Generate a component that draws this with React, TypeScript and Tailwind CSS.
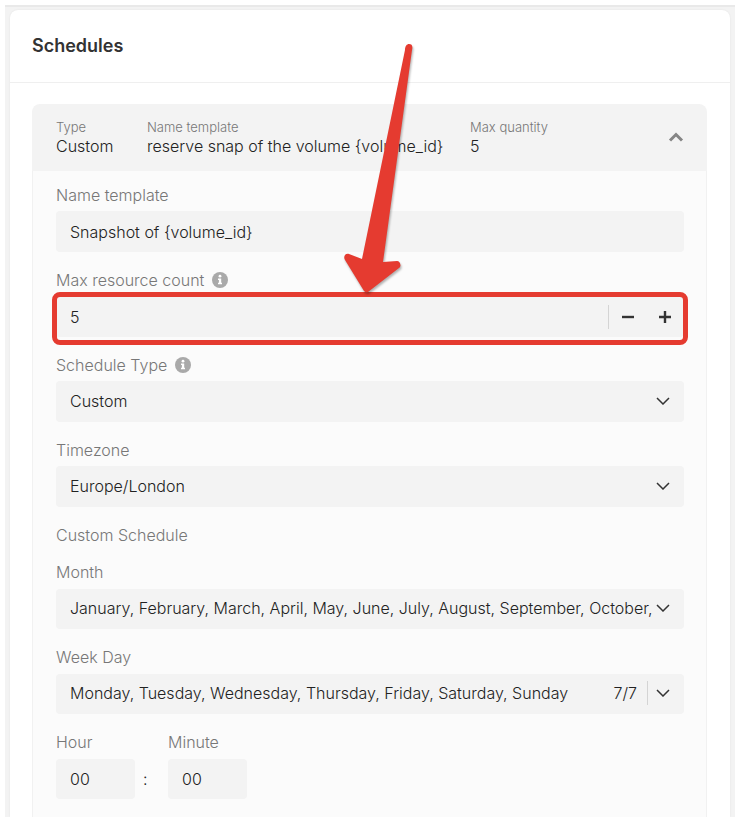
import type { ReactNode } from "react";
import { useState } from "react";

const months =
  "January, February, March, April, May, June, July, August, September, October, November, December";
const weekDays = "Monday, Tuesday, Wednesday, Thursday, Friday, Saturday, Sunday";

function InfoIcon() {
  return (
    <svg className="h-4 w-4" viewBox="0 0 16 16" aria-hidden="true">
      <circle cx="8" cy="8" r="8" fill="#a9a9a9" />
      <circle cx="8" cy="4.2" r="1.4" fill="#fff" />
      <path d="M6 6.6h3.2v4.2H10v1.5H6v-1.5h.9V8.1H6z" fill="#fff" />
    </svg>
  );
}

function ChevronDown() {
  return (
    <svg
      className="pointer-events-none h-2 w-3.5 shrink-0"
      viewBox="0 0 14 8"
      fill="none"
      stroke="#333"
      strokeWidth={1.5}
      aria-hidden="true"
    >
      <path d="M1 1l6 6 6-6" />
    </svg>
  );
}

function Divider() {
  return <span className="h-6 w-px shrink-0 bg-[#d4d4d4]" />;
}

interface LabelProps {
  id: string;
  text: string;
  info?: boolean;
}

function Label({ id, text, info }: LabelProps) {
  return (
    <div className="flex h-6 items-center gap-2 text-[#777]">
      <label htmlFor={id}>{text}</label>
      {info && <InfoIcon />}
    </div>
  );
}

interface SelectFieldProps extends LabelProps {
  value: string;
  count?: string;
  compact?: boolean;
}

function SelectField({ id, text, info, value, count, compact }: SelectFieldProps) {
  return (
    <div className={compact ? "flex flex-col gap-[5px]" : "flex flex-col gap-1"}>
      <Label id={id} text={text} info={info} />
      <div
        className={`flex items-center rounded bg-[#f3f3f3] px-3.5 pb-0.5 ${
          compact ? "h-10" : "h-[41px]"
        }`}
      >
        <select
          id={id}
          className="h-full min-w-0 flex-1 appearance-none overflow-hidden bg-transparent whitespace-nowrap outline-none"
        >
          <option>{value}</option>
        </select>
        {count && (
          <div className="flex items-center gap-2.5 pr-1 pl-3">
            <span>{count}</span>
            <Divider />
          </div>
        )}
        <span className="flex pl-1">
          <ChevronDown />
        </span>
      </div>
    </div>
  );
}

function Summary({ label, children }: { label: string; children: ReactNode }) {
  return (
    <div>
      <div className="text-[13px] leading-[18px] text-[#777]">{label}</div>
      <div className="leading-5 whitespace-nowrap">{children}</div>
    </div>
  );
}

function Highlight() {
  return (
    <>
      <div className="pointer-events-none absolute -inset-x-1 -top-1 -bottom-2 rounded-lg border-5 border-[#e53b30]" />
      <svg
        className="pointer-events-none absolute bottom-full left-1/2 -ml-7 h-[256px] w-[76px] drop-shadow-[1px_2px_1px_rgba(0,0,0,0.3)]"
        viewBox="0 0 76 256"
        aria-hidden="true"
      >
        <path
          d="M63 10C63 6 65 4 67 4C70 4 71 6 70 10L41 222L55 221C58 221 60 226 57 228L26 252Q24 253 22 251L3 220C1 217 3 213 7 214L20 219Z"
          fill="#e53b30"
        />
      </svg>
    </>
  );
}

export default function App() {
  const [open, setOpen] = useState(true);
  const [count, setCount] = useState(5);

  return (
    <div className="flex min-h-screen flex-col bg-white px-[5px] pt-[5px] font-['Inter',sans-serif] text-base font-light text-[#222]">
      <div className="flex flex-1 flex-col border-t-2 border-[#e9e9e9] bg-[#f3f3f3] px-[5px] pt-[3px]">
        <main className="flex flex-1 flex-col rounded-t-lg bg-white shadow-[0_0_2px_rgba(0,0,0,0.08)]">
          <header className="flex h-[73px] items-center border-b border-[#efefef] px-[22px]">
            <h1 className="text-lg font-semibold text-[#333]">Schedules</h1>
          </header>

          <div className="flex flex-1 flex-col pt-[21px] pr-[23px] pl-[22px]">
            <div className="flex h-[67px] items-center justify-between rounded-t-lg bg-[#f3f3f3] pr-[23px] pb-0.5 pl-6">
              <div className="grid grid-cols-[91px_323px_auto]">
                <Summary label="Type">Custom</Summary>
                <Summary label="Name template">{"reserve snap of the volume {volume_id}"}</Summary>
                <Summary label="Max quantity">{count}</Summary>
              </div>
              <button type="button" aria-label="Toggle schedule" onClick={() => setOpen(!open)}>
                <svg className="h-4 w-4" viewBox="0 0 16 16" fill="none" stroke="#858585" strokeWidth={3}>
                  <path d="M2 11.5l6-6 6 6" />
                </svg>
              </button>
            </div>

            {open && (
              <div className="flex flex-1 flex-col gap-4 border-x border-[#f1f1f1] bg-[#fbfbfb] pt-3 pr-[22px] pl-[23px]">
                <div className="flex flex-col gap-1">
                  <Label id="name" text="Name template" />
                  <input
                    id="name"
                    className="h-[41px] w-full rounded bg-[#f3f3f3] px-3.5 outline-none"
                    defaultValue="Snapshot of {volume_id}"
                  />
                </div>

                <div className="flex flex-col gap-1">
                  <Label id="count" text="Max resource count" info />
                  <div className="relative flex h-[41px] items-center rounded bg-[#f3f3f3]">
                    <input
                      id="count"
                      className="h-full min-w-0 flex-1 bg-[#f3f3f3] px-3.5 outline-none"
                      inputMode="numeric"
                      value={count}
                      onChange={(e) => setCount(Number(e.target.value) || 0)}
                    />
                    <Divider />
                    <button
                      type="button"
                      className="flex h-full w-[37px] items-center justify-center"
                      aria-label="Decrease"
                      onClick={() => setCount(count - 1)}
                    >
                      <svg className="h-3 w-3" viewBox="0 0 12 12" stroke="#333" strokeWidth={2.4}>
                        <path d="M0 6h12" />
                      </svg>
                    </button>
                    <button
                      type="button"
                      className="mr-px flex h-full w-[37px] items-center justify-center"
                      aria-label="Increase"
                      onClick={() => setCount(count + 1)}
                    >
                      <svg className="h-3 w-3" viewBox="0 0 12 12" stroke="#333" strokeWidth={2.4}>
                        <path d="M0 6h12M6 0v12" />
                      </svg>
                    </button>
                    <Highlight />
                  </div>
                </div>

                <SelectField id="type" text="Schedule Type" info value="Custom" />
                <SelectField id="timezone" text="Timezone" value="Europe/London" />

                <fieldset className="flex min-w-0 flex-col gap-4">
                  <legend className="mb-[13px] h-6 text-[#777]">Custom Schedule</legend>
                  <SelectField id="month" text="Month" value={months} compact />
                  <SelectField id="weekday" text="Week Day" value={weekDays} count="7/7" compact />

                  <div className="flex items-end">
                    <div className="flex flex-col gap-[5px]">
                      <Label id="hour" text="Hour" />
                      <input
                        id="hour"
                        className="h-10 w-[79px] rounded bg-[#f3f3f3] px-3.5 outline-none"
                        defaultValue="00"
                      />
                    </div>
                    <span className="flex h-10 w-[33px] items-center pl-2">:</span>
                    <div className="flex flex-col gap-[5px]">
                      <Label id="minute" text="Minute" />
                      <input
                        id="minute"
                        className="h-10 w-[79px] rounded bg-[#f3f3f3] px-3.5 outline-none"
                        defaultValue="00"
                      />
                    </div>
                  </div>
                </fieldset>
              </div>
            )}
          </div>
        </main>
      </div>
    </div>
  );
}
